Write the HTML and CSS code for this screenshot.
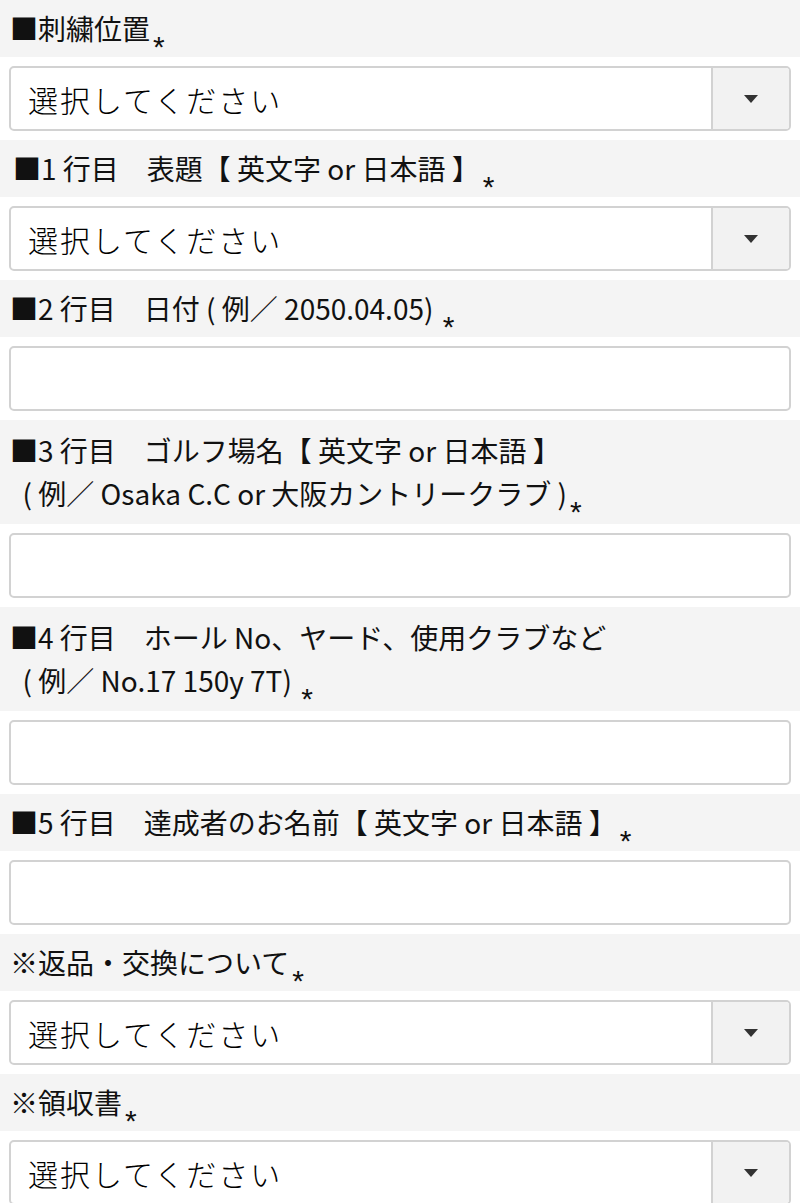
FILE: index.html
```html
<!DOCTYPE html>
<html lang="ja">
<head>
  <meta charset="UTF-8">
  <title>刺繍オプション</title>
  <link rel="stylesheet" href="styles.css">
</head>
<body>

<form class="embroidery-form">

  <!-- 刺繍位置 -->
  <div class="field">
    <div class="field-label">■刺繍位置<span class="req">*</span></div>
    <div class="field-body">
      <div class="select">
        <select>
          <option>選択してください</option>
        </select>
        <span class="select-btn"><svg width="14" height="8" viewBox="0 0 14 8"><path d="M0 0H14L7 8Z" fill="#333"/></svg></span>
      </div>
    </div>
  </div>

  <!-- 1行目 -->
  <div class="field">
    <div class="field-label indent">■1 行目　表題【 英文字 or 日本語 】<span class="req">*</span></div>
    <div class="field-body">
      <div class="select">
        <select>
          <option>選択してください</option>
        </select>
        <span class="select-btn"><svg width="14" height="8" viewBox="0 0 14 8"><path d="M0 0H14L7 8Z" fill="#333"/></svg></span>
      </div>
    </div>
  </div>

  <!-- 2行目 -->
  <div class="field">
    <div class="field-label">■2 行目　日付 ( 例／ 2050.04.05) <span class="req">*</span></div>
    <div class="field-body">
      <input type="text" class="text-input">
    </div>
  </div>

  <!-- 3行目 -->
  <div class="field">
    <div class="field-label two-line">■3 行目　ゴルフ場名【 英文字 or 日本語 】<br>&nbsp; ( 例／ Osaka C.C or 大阪カントリークラブ )<span class="req">*</span></div>
    <div class="field-body">
      <input type="text" class="text-input">
    </div>
  </div>

  <!-- 4行目 -->
  <div class="field">
    <div class="field-label two-line">■4 行目　ホール No、ヤード、使用クラブなど<br>&nbsp; ( 例／ No.17 150y 7T) <span class="req">*</span></div>
    <div class="field-body">
      <input type="text" class="text-input">
    </div>
  </div>

  <!-- 5行目 -->
  <div class="field">
    <div class="field-label">■5 行目　達成者のお名前【 英文字 or 日本語 】<span class="req">*</span></div>
    <div class="field-body">
      <input type="text" class="text-input">
    </div>
  </div>

  <!-- 返品・交換 -->
  <div class="field">
    <div class="field-label">※返品・交換について<span class="req">*</span></div>
    <div class="field-body">
      <div class="select">
        <select>
          <option>選択してください</option>
        </select>
        <span class="select-btn"><svg width="14" height="8" viewBox="0 0 14 8"><path d="M0 0H14L7 8Z" fill="#333"/></svg></span>
      </div>
    </div>
  </div>

  <!-- 領収書 -->
  <div class="field">
    <div class="field-label">※領収書<span class="req">*</span></div>
    <div class="field-body">
      <div class="select">
        <select>
          <option>選択してください</option>
        </select>
        <span class="select-btn"><svg width="14" height="8" viewBox="0 0 14 8"><path d="M0 0H14L7 8Z" fill="#333"/></svg></span>
      </div>
    </div>
  </div>

</form>

</body>
</html>
```

FILE: styles.css
```css
body {
  margin: 0;
  padding: 0;
  font-family: "Noto Sans CJK JP", "Noto Sans", sans-serif;
  color: #111;
  background: #fff;
}
.embroidery-form {
  margin: 0;
}
.field-label {
  background: #f4f4f4;
  padding: 7px 10px;
  font-size: 28px;
  font-weight: 400;
  line-height: 43px;
  white-space: nowrap;
}
.field-label.indent {
  padding-left: 13px;
}
.field-label.two-line {
  padding-top: 9px;
  padding-bottom: 9px;
}
.req {
  font-family: "Liberation Sans", sans-serif;
  font-size: 30px;
  vertical-align: -17px;
  margin-left: 3px;
  line-height: 0;
}
.field-body {
  padding: 9px;
}

/* セレクト */
.select {
  display: flex;
  height: 65px;
  box-sizing: border-box;
  border: 2px solid #d2d2d2;
  border-radius: 5px;
  overflow: hidden;
  background: #fff;
}
.select select {
  flex: 1;
  appearance: none;
  -webkit-appearance: none;
  border: none;
  outline: none;
  background: transparent;
  font-family: inherit;
  font-size: 30px;
  font-weight: 300;
  letter-spacing: 2px;
  color: #000;
  padding: 0 0 0 17px;
  margin: 0;
}
.select-btn {
  width: 76px;
  border-left: 2px solid #d2d2d2;
  background: #f2f2f2;
  display: flex;
  align-items: center;
  justify-content: center;
}

/* テキスト入力 */
.text-input {
  display: block;
  width: 100%;
  height: 65px;
  box-sizing: border-box;
  border: 2px solid #d2d2d2;
  border-radius: 5px;
  background: #fff;
  font-family: inherit;
  font-size: 28px;
  padding: 0 17px;
  margin: 0;
  outline: none;
}
```
